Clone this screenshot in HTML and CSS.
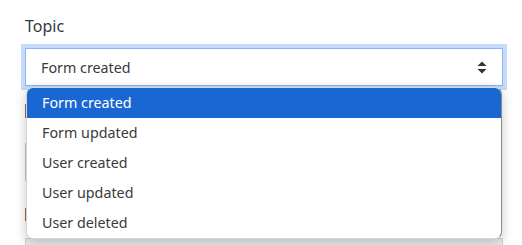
FILE: index.html
```html
<!DOCTYPE html>
<html>
<head>
<meta charset="utf-8">
<link rel="stylesheet" href="styles.css">
</head>
<body>
<div class="form">
  <label class="label">Topic</label>
  <div class="field">
    <div class="select">
      <span class="value">Form created</span>
      <svg class="arrows" width="10" height="13" viewBox="0 0 10 13"><path d="M5 0.5 L9.5 5 L0.5 5 Z" fill="#333"/><path d="M0.5 8 L9.5 8 L5 12.5 Z" fill="#333"/></svg>
    </div>
    <ul class="menu">
      <li class="opt active">Form created</li>
      <li class="opt">Form updated</li>
      <li class="opt">User created</li>
      <li class="opt">User updated</li>
      <li class="opt">User deleted</li>
    </ul>
  </div>
  <div class="behind">
    <div class="mark brown m1"></div>
    <div class="mark grey m2"></div>
    <div class="mark brown m3"></div>
    <div class="next"></div>
  </div>
</div>
</body>
</html>
```
FILE: styles.css
```css
* { box-sizing: border-box; }
html, body { margin: 0; padding: 0; background: #fff; }
body { font-family: "Noto Sans", "Open Sans", sans-serif; color: #333; width: 522px; height: 245px; overflow: hidden; }
.form { padding: 14px 19px 0 25px; }
.label { display: block; font-size: 16px; line-height: 24px; height: 24px; margin-bottom: 10px; color: #343a40; }
.field { position: relative; }
.select {
  height: 38px;
  border: 1px solid #86b7fe;
  box-shadow: 0 0 0 4px #c5dbf7;
  border-radius: 0;
  background: #fff;
  display: flex;
  align-items: center;
  justify-content: space-between;
  padding: 0 15px 0 15px;
  font-size: 14.3px;
  color: #3a3a3a;
}
.arrows { display: block; }
.menu {
  position: absolute;
  left: 1px;
  right: 1px;
  top: 39px;
  margin: 0;
  padding: 0;
  list-style: none;
  background: #fff;
  border: 1px solid #d6d6d6;
  border-right-color: #8a8a8a;
  border-radius: 7px;
  overflow: hidden;
  box-shadow: 0 3px 12px rgba(0,0,0,0.22);
  z-index: 2;
}
.opt { height: 30px; line-height: 30px; padding: 0 15px; font-size: 14.3px; color: #3a3a3a; }
.opt.active { background: #1967d2; color: #fff; }
.behind { display: flex; flex-direction: column; }
.mark { width: 1px; }
.brown { background: #9a6a44; }
.grey { background: #c8c8c8; }
.m1 { margin-top: 18px; height: 14px; }
.m2 { margin-top: 25px; height: 38px; }
.m3 { margin-top: 27px; height: 13px; }
.next { margin-top: 17px; height: 7px; border: 1px solid #ced4da; border-bottom: 0; background: #e9ecef; }
```
